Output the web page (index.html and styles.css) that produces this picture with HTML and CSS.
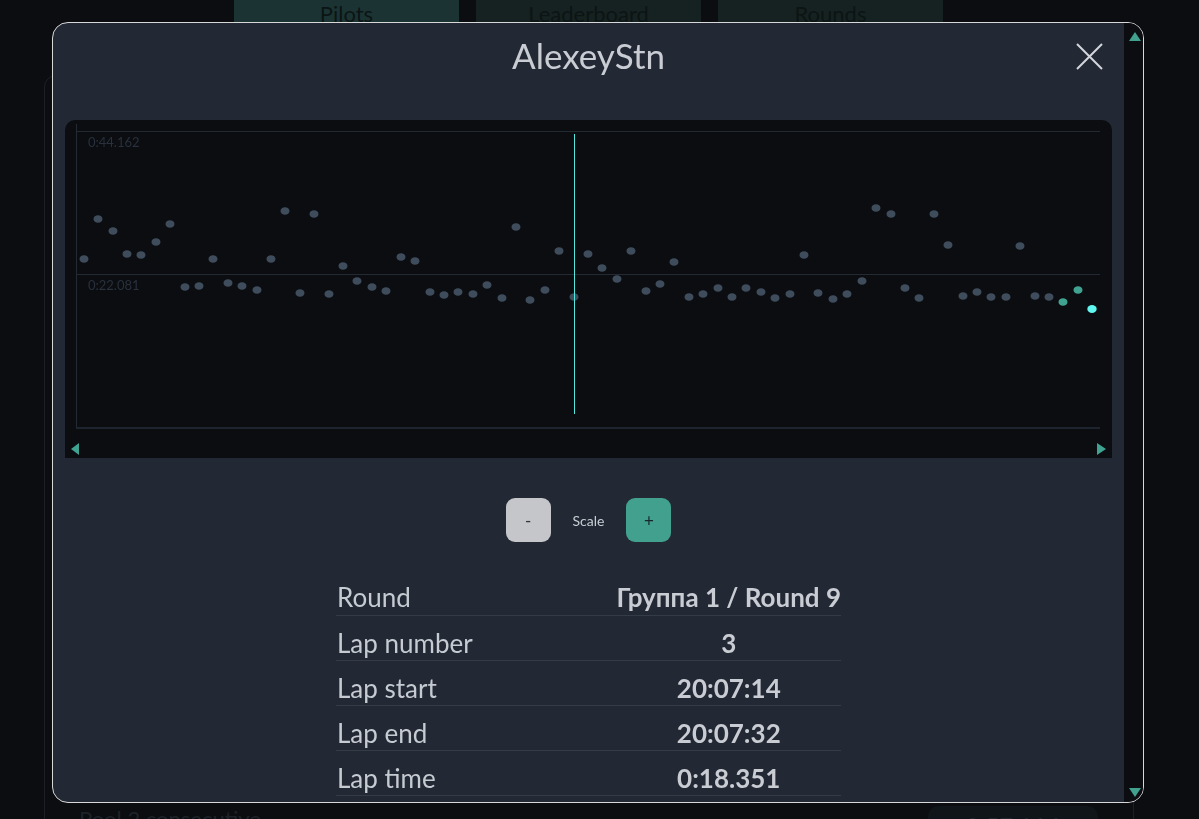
FILE: index.html
```html
<!DOCTYPE html>
<html lang="en">
<head>
<meta charset="utf-8">
<title>AlexeyStn</title>
<link rel="stylesheet" href="styles.css">
</head>
<body>
<div class="page">
  <nav class="tabs">
    <div class="tab active">Pilots</div>
    <div class="tab">Leaderboard</div>
    <div class="tab">Rounds</div>
  </nav>
  <section class="card">
    <div class="card-row">
      <span class="card-name">Pool 2 consecutive</span>
      <span class="card-time">0:57.116</span>
    </div>
  </section>
</div>

<div class="modal">
  <div class="modal-body">
    <header class="modal-header">
      <h1 class="modal-title">AlexeyStn</h1>
      <button class="close" aria-label="Close">
        <svg width="27" height="27" viewBox="0 0 27 27"><path d="M1 1 L26 26 M26 1 L1 26" stroke="#d3d6da" stroke-width="2" fill="none"/></svg>
      </button>
    </header>

    <div class="chart">
      <svg class="chart-svg" width="1047" height="338" viewBox="65 120 1047 338">
        <line x1="76.5" y1="124" x2="76.5" y2="428" stroke="#232a34" stroke-width="1"/>
        <line x1="76" y1="131.5" x2="1100" y2="131.5" stroke="#232a34" stroke-width="1"/>
        <line x1="76" y1="274.5" x2="1100" y2="274.5" stroke="#232a34" stroke-width="1.2"/>
        <line x1="76" y1="428" x2="1100" y2="428" stroke="#262d38" stroke-width="1.5"/>
        <text class="axis-label" x="88" y="147">0:44.162</text>
        <text class="axis-label" x="88" y="290">0:22.081</text>
        <g fill="#3e4c5c">
          <ellipse cx="84" cy="259" rx="4.5" ry="3.8"/>
          <ellipse cx="98" cy="219" rx="4.5" ry="3.8"/>
          <ellipse cx="113" cy="231" rx="4.5" ry="3.8"/>
          <ellipse cx="127" cy="254" rx="4.5" ry="3.8"/>
          <ellipse cx="141" cy="255" rx="4.5" ry="3.8"/>
          <ellipse cx="156" cy="242" rx="4.5" ry="3.8"/>
          <ellipse cx="170" cy="224" rx="4.5" ry="3.8"/>
          <ellipse cx="185" cy="287" rx="4.5" ry="3.8"/>
          <ellipse cx="199" cy="286" rx="4.5" ry="3.8"/>
          <ellipse cx="213" cy="259" rx="4.5" ry="3.8"/>
          <ellipse cx="228" cy="283" rx="4.5" ry="3.8"/>
          <ellipse cx="242" cy="286" rx="4.5" ry="3.8"/>
          <ellipse cx="257" cy="290" rx="4.5" ry="3.8"/>
          <ellipse cx="271" cy="259" rx="4.5" ry="3.8"/>
          <ellipse cx="285" cy="211" rx="4.5" ry="3.8"/>
          <ellipse cx="300" cy="293" rx="4.5" ry="3.8"/>
          <ellipse cx="314" cy="214" rx="4.5" ry="3.8"/>
          <ellipse cx="329" cy="294" rx="4.5" ry="3.8"/>
          <ellipse cx="343" cy="266" rx="4.5" ry="3.8"/>
          <ellipse cx="357" cy="281" rx="4.5" ry="3.8"/>
          <ellipse cx="372" cy="287" rx="4.5" ry="3.8"/>
          <ellipse cx="386" cy="291" rx="4.5" ry="3.8"/>
          <ellipse cx="401" cy="257" rx="4.5" ry="3.8"/>
          <ellipse cx="415" cy="261" rx="4.5" ry="3.8"/>
          <ellipse cx="430" cy="292" rx="4.5" ry="3.8"/>
          <ellipse cx="444" cy="295" rx="4.5" ry="3.8"/>
          <ellipse cx="458" cy="292" rx="4.5" ry="3.8"/>
          <ellipse cx="473" cy="294" rx="4.5" ry="3.8"/>
          <ellipse cx="487" cy="285" rx="4.5" ry="3.8"/>
          <ellipse cx="502" cy="298" rx="4.5" ry="3.8"/>
          <ellipse cx="516" cy="227" rx="4.5" ry="3.8"/>
          <ellipse cx="530" cy="300" rx="4.5" ry="3.8"/>
          <ellipse cx="545" cy="290" rx="4.5" ry="3.8"/>
          <ellipse cx="559" cy="251" rx="4.5" ry="3.8"/>
          <ellipse cx="574" cy="297" rx="4.5" ry="3.8"/>
          <ellipse cx="588" cy="254" rx="4.5" ry="3.8"/>
          <ellipse cx="602" cy="268" rx="4.5" ry="3.8"/>
          <ellipse cx="617" cy="279" rx="4.5" ry="3.8"/>
          <ellipse cx="631" cy="251" rx="4.5" ry="3.8"/>
          <ellipse cx="646" cy="291" rx="4.5" ry="3.8"/>
          <ellipse cx="660" cy="284" rx="4.5" ry="3.8"/>
          <ellipse cx="674" cy="262" rx="4.5" ry="3.8"/>
          <ellipse cx="689" cy="297" rx="4.5" ry="3.8"/>
          <ellipse cx="703" cy="294" rx="4.5" ry="3.8"/>
          <ellipse cx="718" cy="288" rx="4.5" ry="3.8"/>
          <ellipse cx="732" cy="297" rx="4.5" ry="3.8"/>
          <ellipse cx="746" cy="288" rx="4.5" ry="3.8"/>
          <ellipse cx="761" cy="292" rx="4.5" ry="3.8"/>
          <ellipse cx="775" cy="298" rx="4.5" ry="3.8"/>
          <ellipse cx="790" cy="294" rx="4.5" ry="3.8"/>
          <ellipse cx="804" cy="255" rx="4.5" ry="3.8"/>
          <ellipse cx="818" cy="293" rx="4.5" ry="3.8"/>
          <ellipse cx="833" cy="299" rx="4.5" ry="3.8"/>
          <ellipse cx="847" cy="294" rx="4.5" ry="3.8"/>
          <ellipse cx="862" cy="281" rx="4.5" ry="3.8"/>
          <ellipse cx="876" cy="208" rx="4.5" ry="3.8"/>
          <ellipse cx="891" cy="214" rx="4.5" ry="3.8"/>
          <ellipse cx="905" cy="288" rx="4.5" ry="3.8"/>
          <ellipse cx="919" cy="298" rx="4.5" ry="3.8"/>
          <ellipse cx="934" cy="214" rx="4.5" ry="3.8"/>
          <ellipse cx="948" cy="245" rx="4.5" ry="3.8"/>
          <ellipse cx="963" cy="296" rx="4.5" ry="3.8"/>
          <ellipse cx="977" cy="292" rx="4.5" ry="3.8"/>
          <ellipse cx="991" cy="297" rx="4.5" ry="3.8"/>
          <ellipse cx="1006" cy="297" rx="4.5" ry="3.8"/>
          <ellipse cx="1020" cy="246" rx="4.5" ry="3.8"/>
          <ellipse cx="1035" cy="296" rx="4.5" ry="3.8"/>
          <ellipse cx="1049" cy="297" rx="4.5" ry="3.8"/>
        </g>
        <ellipse cx="1063" cy="302" rx="4.5" ry="3.8" fill="#40a391"/>
        <ellipse cx="1078" cy="290" rx="4.5" ry="3.8" fill="#40a391"/>
        <ellipse cx="1092" cy="309" rx="4.7" ry="4" fill="#5ff7f0"/>
        <line x1="574.5" y1="134" x2="574.5" y2="414" stroke="#55e8e0" stroke-width="1"/>
        <polygon points="71,449 79,443 79,455" fill="#40a391"/>
        <polygon points="1106,449 1097,443 1097,455" fill="#40a391"/>
      </svg>
    </div>

    <div class="scale">
      <button class="scale-btn minus">-</button>
      <span class="scale-label">Scale</span>
      <button class="scale-btn plus">+</button>
    </div>

    <table class="info">
      <tr><td class="info-label">Round</td><td class="info-value">Группа 1 / Round 9</td></tr>
      <tr><td class="info-label">Lap number</td><td class="info-value">3</td></tr>
      <tr><td class="info-label">Lap start</td><td class="info-value">20:07:14</td></tr>
      <tr><td class="info-label">Lap end</td><td class="info-value">20:07:32</td></tr>
      <tr><td class="info-label">Lap time</td><td class="info-value">0:18.351</td></tr>
    </table>
  </div>
  <div class="scrollbar">
    <span class="sb-arrow up"></span>
    <span class="sb-arrow down"></span>
  </div>
</div>
</body>
</html>
```
FILE: styles.css
```css
* { box-sizing: border-box; }

html, body {
  margin: 0;
  height: 100%;
}

body {
  background: #0b0d11;
  font-family: Lato, "Open Sans", "Noto Sans", sans-serif;
  color: #c6cbd2;
  overflow: hidden;
}

.page {
  height: 819px;
}

.tabs {
  display: flex;
  gap: 17px;
  padding-left: 234px;
}

.tab {
  width: 225px;
  height: 40px;
  line-height: 28px;
  text-align: center;
  font-size: 22px;
  color: #0c1414;
  background: #162221;
}

.tab.active {
  background: #1b3433;
}

.card {
  margin: 35px 0 0 44px;
  width: 1090px;
  height: 800px;
  border: 1px solid #1c2026;
  border-radius: 12px;
  padding: 728px 34px 0 34px;
}

.card-row {
  display: flex;
  justify-content: space-between;
  align-items: flex-start;
}

.card-name {
  font-size: 22px;
  color: #1d2228;
  line-height: 30px;
}

.card-time {
  width: 170px;
  height: 40px;
  border-radius: 10px;
  background: #0f1518;
  color: #22282e;
  font-size: 24px;
  text-align: center;
  line-height: 40px;
  margin-top: 2px;
  margin-right: 1px;
}

/* modal */
.modal {
  position: fixed;
  left: 52px;
  top: 22px;
  width: 1092px;
  height: 781px;
  border: 1px solid #d8d8d8;
  border-radius: 16px;
  background: #222834;
  display: flex;
  overflow: hidden;
}

.modal-body {
  flex: 1;
  display: flex;
  flex-direction: column;
  min-height: 0;
}

.modal-body > * {
  flex-shrink: 0;
}

.modal-header {
  display: grid;
  grid-template-columns: 1fr auto 1fr;
  align-items: center;
  padding: 12px 0 45px;
}

.modal-title {
  grid-column: 2;
  margin: 0;
  font-size: 35px;
  font-weight: 400;
  line-height: 40px;
  color: #c9cdd3;
}

.close {
  grid-column: 3;
  justify-self: end;
  margin-right: 21px;
  margin-top: 2px;
  padding: 0;
  border: 0;
  background: none;
  width: 27px;
  height: 27px;
  display: flex;
}

.chart {
  margin: 0 12px;
  height: 338px;
  background: #0b0d11;
  border-radius: 10px 10px 0 0;
  overflow: hidden;
}

.chart-svg {
  display: block;
}

.axis-label {
  font-family: Lato, "Open Sans", sans-serif;
  font-size: 13px;
  fill: #28313d;
}

.scale {
  display: flex;
  justify-content: center;
  align-items: center;
  gap: 22px;
  margin-top: 40px;
}

.scale-btn {
  width: 45px;
  height: 44px;
  border: 0;
  border-radius: 9px;
  font-family: Lato, sans-serif;
  font-size: 17px;
  padding: 0;
}

.scale-btn.minus {
  background: #c5c6c9;
  color: #33373d;
}

.scale-btn.plus {
  background: #42a08f;
  color: #16262a;
}

.scale-label {
  font-size: 14px;
  color: #c9cdd3;
}

.info {
  margin: 28px auto 0;
  width: 505px;
  border-collapse: collapse;
  font-size: 26px;
}

.info td {
  padding: 10px 0 0 1px;
  height: 45px;
  line-height: 34px;
  border-bottom: 1px solid #343c48;
  vertical-align: top;
  white-space: nowrap;
}

.info-label {
  width: 280px;
  color: #c6cbd2;
}

.info-value {
  text-align: center;
  font-weight: 700;
  color: #c9cdd3;
}

/* fake scrollbar */
.scrollbar {
  width: 19px;
  background: #0b0d11;
  display: flex;
  flex-direction: column;
  justify-content: space-between;
  align-items: center;
  padding: 9px 0 5px 2px;
}

.sb-arrow {
  width: 0;
  height: 0;
  border-left: 6px solid transparent;
  border-right: 6px solid transparent;
}

.sb-arrow.up {
  border-bottom: 9px solid #42a08f;
}

.sb-arrow.down {
  border-top: 9px solid #42a08f;
}
```
